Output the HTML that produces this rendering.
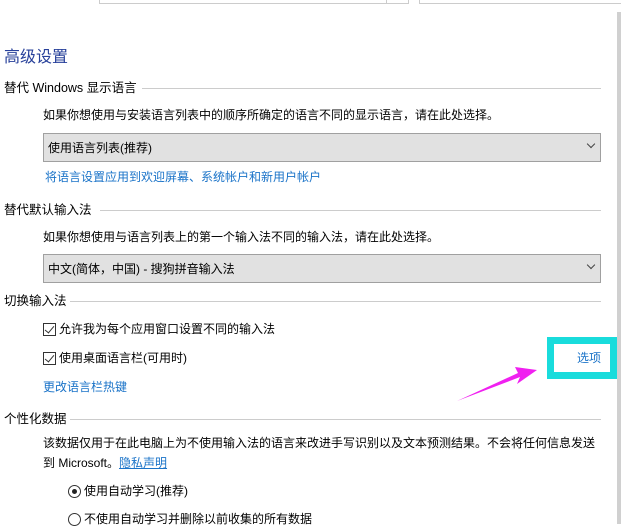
<!DOCTYPE html>
<html><head><meta charset="utf-8"><style>
body{margin:0;width:621px;height:524px;background:#fff;position:relative;overflow:hidden;font-family:"Liberation Sans","Noto Sans CJK SC",sans-serif;font-size:12px;color:#000}
.a{position:absolute;white-space:nowrap;line-height:16px}
.h{font-size:12.5px}
.line{position:absolute;height:1px;background:#ccc}
.dd{position:absolute;left:43px;width:556px;height:27px;background:#e1e1e1;border:1px solid #a0a0a0}
.dd span{position:absolute;left:4px;top:5px}
.dd i{position:absolute;right:6px;top:7px;width:5px;height:5px;border-right:1px solid #444;border-bottom:1px solid #444;transform:rotate(45deg)}
.lk{color:#1a73c8}
.cb{position:absolute;width:11px;height:11px;border:1px solid #333}
.cb:after{content:"";position:absolute;left:3px;top:0px;width:4px;height:8px;border-right:1.5px solid #333;border-bottom:1.5px solid #333;transform:rotate(40deg)}
.rd{position:absolute;width:11px;height:11px;border:1px solid #333;border-radius:50%}
</style></head><body>
<div style="position:absolute;left:99px;top:-2px;width:308px;height:4px;border:1px solid #ccc"></div>
<div style="position:absolute;left:386px;top:0;width:1px;height:3px;background:#ccc"></div>
<div style="position:absolute;left:419px;top:-2px;width:210px;height:4px;border:1px solid #ccc"></div>
<div style="position:absolute;left:617px;top:12px;width:4px;height:512px;background:#d0d0d0"></div>

<div class="a" style="left:4px;top:48px;font-size:16px;line-height:20px;color:#27409a">高级设置</div>

<div class="a h" style="left:4px;top:80px">替代 Windows 显示语言</div>
<div class="line" style="left:142px;top:88px;width:459px"></div>
<div class="a" style="left:43px;top:107px">如果你想使用与安装语言列表中的顺序所确定的语言不同的显示语言，请在此处选择。</div>
<div class="dd" style="top:133px"><span>使用语言列表(推荐)</span><i></i></div>
<div class="a lk" style="left:45px;top:169px">将语言设置应用到欢迎屏幕、系统帐户和新用户帐户</div>

<div class="a h" style="left:4px;top:202px">替代默认输入法</div>
<div class="line" style="left:100px;top:210px;width:501px"></div>
<div class="a" style="left:43px;top:229px">如果你想使用与语言列表上的第一个输入法不同的输入法，请在此处选择。</div>
<div class="dd" style="top:254px"><span>中文(简体，中国) - 搜狗拼音输入法</span><i></i></div>

<div class="a h" style="left:4px;top:293px">切换输入法</div>
<div class="line" style="left:70px;top:301px;width:531px"></div>
<div class="cb" style="left:43px;top:323px"></div>
<div class="a" style="left:59px;top:321px">允许我为每个应用窗口设置不同的输入法</div>
<div class="cb" style="left:43px;top:352px"></div>
<div class="a" style="left:59px;top:350px">使用桌面语言栏(可用时)</div>
<div class="a lk" style="left:43px;top:379px">更改语言栏热键</div>

<div style="position:absolute;left:547px;top:337px;width:56px;height:28px;border:7px solid #19dcdc"></div>
<div class="a lk" style="left:577px;top:350px">选项</div>
<svg style="position:absolute;left:0;top:0" width="621" height="524"><polygon points="457,401 520,377 517,384 537,370 515,367 518,373" fill="#f020f0"/></svg>

<div class="a h" style="left:4px;top:411px">个性化数据</div>
<div class="line" style="left:70px;top:419px;width:531px"></div>
<div class="a" style="left:43px;top:435px">该数据仅用于在此电脑上为不使用输入法的语言来改进手写识别以及文本预测结果。不会将任何信息发送</div>
<div class="a" style="left:43px;top:455px">到 Microsoft。<span class="lk" style="text-decoration:underline">隐私声明</span></div>
<div class="rd" style="left:68px;top:485px"><div style="position:absolute;left:3px;top:3px;width:5px;height:5px;border-radius:50%;background:#222"></div></div>
<div class="a" style="left:84px;top:483px">使用自动学习(推荐)</div>
<div class="rd" style="left:68px;top:513px"></div>
<div class="a" style="left:84px;top:511px">不使用自动学习并删除以前收集的所有数据</div>
</body></html>
